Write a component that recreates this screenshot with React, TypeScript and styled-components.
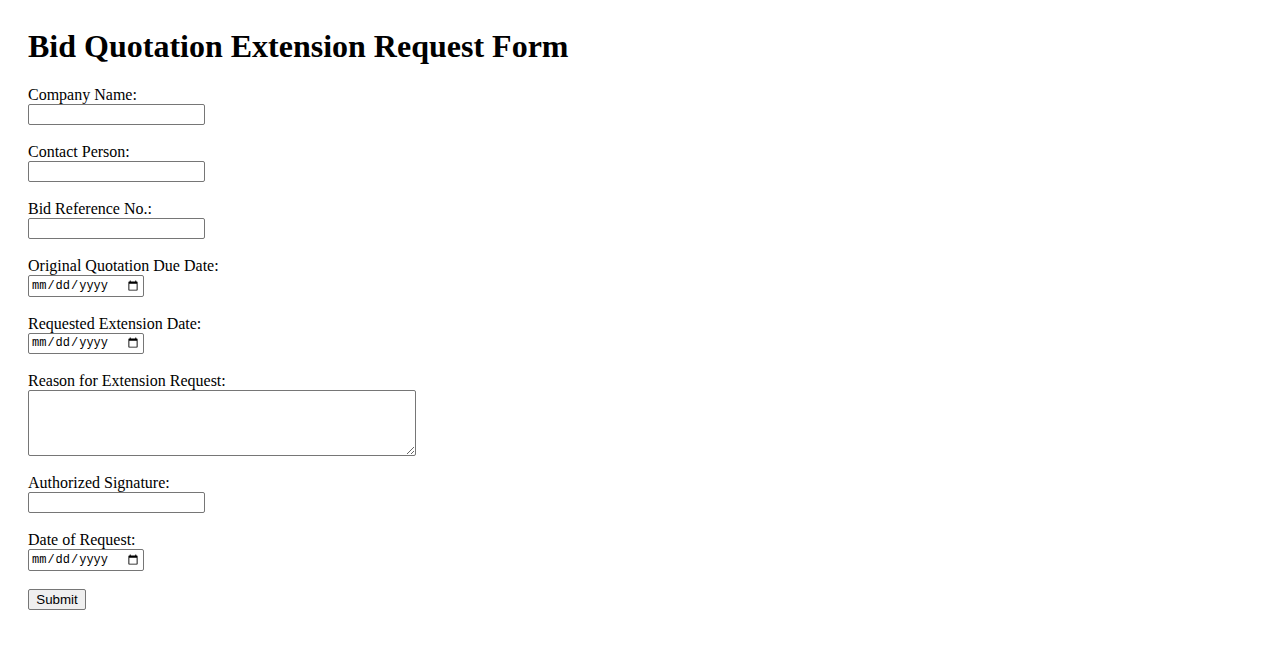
import styled, { createGlobalStyle } from 'styled-components';

const GlobalStyle = createGlobalStyle`
  body {
    margin: 0;
    background: #fff;
    color: #000;
    font-family: "Liberation Serif", "Times New Roman", serif;
    font-size: 16px;
  }
`;

const Page = styled.div`
  padding: 28px;
`;

const Title = styled.h1`
  margin: 0 0 21px;
  font-size: 32px;
  line-height: 37px;
  font-weight: bold;
`;

const Form = styled.form`
  display: flex;
  flex-direction: column;
  align-items: flex-start;
`;

const Field = styled.div`
  display: flex;
  flex-direction: column;
  align-items: flex-start;
  margin-bottom: 18px;
`;

const Label = styled.label`
  line-height: 18px;
`;

const Input = styled.input<{ $width?: number; $height?: number }>`
  box-sizing: border-box;
  width: ${(p) => p.$width ?? 177}px;
  height: ${(p) => p.$height ?? 21}px;
  margin: 0;
  padding: 1px 2px;
  border: 1px solid #767676;
  border-radius: 2px;
  background: #fff;
  font-family: "Liberation Mono", "DejaVu Sans Mono", monospace;
  font-size: 12px;
`;

const TextArea = styled.textarea`
  box-sizing: border-box;
  width: 388px;
  height: 66px;
  margin: 0;
  padding: 2px;
  border: 1px solid #767676;
  border-radius: 2px;
  font-family: "Liberation Mono", monospace;
  font-size: 13px;
`;

const SubmitButton = styled.button`
  box-sizing: border-box;
  width: 58px;
  height: 21px;
  padding: 1px 6px;
  border: 1px solid #767676;
  border-radius: 2px;
  background: #efefef;
  color: #000;
  font-family: "Liberation Sans", Arial, sans-serif;
  font-size: 13.33px;
`;

type FieldDef = {
  id: string;
  label: string;
  kind: 'text' | 'date' | 'textarea';
};

const fields: FieldDef[] = [
  { id: 'company', label: 'Company Name:', kind: 'text' },
  { id: 'contact', label: 'Contact Person:', kind: 'text' },
  { id: 'bidref', label: 'Bid Reference No.:', kind: 'text' },
  { id: 'origdue', label: 'Original Quotation Due Date:', kind: 'date' },
  { id: 'extdate', label: 'Requested Extension Date:', kind: 'date' },
  { id: 'reason', label: 'Reason for Extension Request:', kind: 'textarea' },
  { id: 'signature', label: 'Authorized Signature:', kind: 'text' },
  { id: 'reqdate', label: 'Date of Request:', kind: 'date' },
];

export default function App() {
  return (
    <Page>
      <GlobalStyle />
      <Title>Bid Quotation Extension Request Form</Title>
      <Form onSubmit={(e) => e.preventDefault()}>
        {fields.map((f) => (
          <Field key={f.id}>
            <Label htmlFor={f.id}>{f.label}</Label>
            {f.kind === 'textarea' ? (
              <TextArea id={f.id} />
            ) : f.kind === 'date' ? (
              <Input id={f.id} type="date" $width={116} $height={21.5} />
            ) : (
              <Input id={f.id} type="text" />
            )}
          </Field>
        ))}
        <SubmitButton type="submit">Submit</SubmitButton>
      </Form>
    </Page>
  );
}
